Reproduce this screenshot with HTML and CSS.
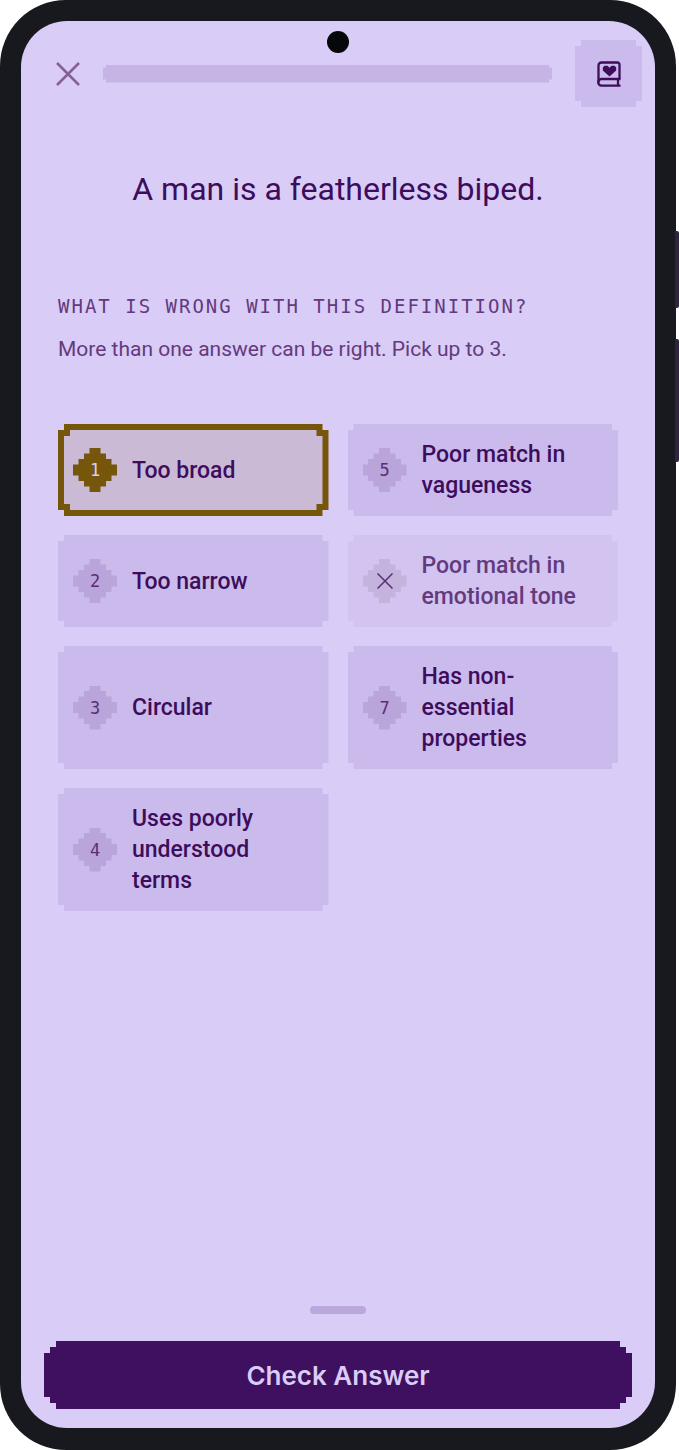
FILE: index.html
```html
<!DOCTYPE html>
<html lang="en">
<head>
    <meta charset="UTF-8">
    <meta name="viewport" content="width=device-width, initial-scale=1.0">
    <title>Definition Quiz</title>
    <link rel="stylesheet" href="styles.css">
</head>
<body>
    <div class="phone">
        <span class="side-button power"></span>
        <span class="side-button volume"></span>
        <span class="camera"></span>

        <div class="screen">
            <header class="top-bar">
                <button type="button" class="close" aria-label="Close">
                    <svg viewBox="0 0 24 24" width="24" height="24" fill="none" stroke="currentColor" stroke-width="2.500">
                        <path d="M1 1L23 23M23 1L1 23"/>
                    </svg>
                </button>
                <progress class="progress" value="0" max="100" aria-label="Progress"></progress>
                <button type="button" class="book" aria-label="Saved lessons">
                    <svg viewBox="0 0 24 26" width="24" height="26" fill="none" stroke="currentColor" stroke-width="2.300" stroke-linejoin="round">
                        <path d="M22.500 18V3.500a2 2 0 0 0-2-2H4.500a3 3 0 0 0-3 3v17"/>
                        <path d="M23.500 18H4.500a3.300 3.300 0 0 0 0 6.600H23.500M21 18v6.500"/>
                        <path d="M12.500 15.500L5.800 9.500V6.500L7.500 4.800h3l2 2 2-2h3l1.700 1.700v3z" fill="currentColor" stroke="none"/>
                    </svg>
                </button>
            </header>

            <main class="content">
                <h1>A man is a featherless biped.</h1>

                <h2>WHAT IS WRONG WITH THIS DEFINITION?</h2>
                <p class="hint">More than one answer can be right. Pick up to 3.</p>

                <form class="options" id="quiz">
                    <label class="option">
                        <input type="checkbox" name="answer" value="1" checked>
                        <span class="badge">1</span>
                        <span class="text">Too broad</span>
                    </label>
                    <label class="option">
                        <input type="checkbox" name="answer" value="2">
                        <span class="badge">2</span>
                        <span class="text">Too narrow</span>
                    </label>
                    <label class="option">
                        <input type="checkbox" name="answer" value="3">
                        <span class="badge">3</span>
                        <span class="text">Circular</span>
                    </label>
                    <label class="option">
                        <input type="checkbox" name="answer" value="4">
                        <span class="badge">4</span>
                        <span class="text">Uses poorly understood terms</span>
                    </label>
                    <label class="option">
                        <input type="checkbox" name="answer" value="5">
                        <span class="badge">5</span>
                        <span class="text">Poor match in vagueness</span>
                    </label>
                    <label class="option excluded">
                        <input type="checkbox" name="answer" value="6" disabled>
                        <span class="badge">
                            <svg viewBox="0 0 16 16" width="16" height="16" fill="none" stroke="currentColor" stroke-width="1.500">
                                <path d="M.5.5l15 15M15.500.5l-15 15"/>
                            </svg>
                        </span>
                        <span class="text">Poor match in emotional tone</span>
                    </label>
                    <label class="option">
                        <input type="checkbox" name="answer" value="7">
                        <span class="badge">7</span>
                        <span class="text">Has non-essential properties</span>
                    </label>
                </form>
            </main>

            <footer class="bottom">
                <span class="handle"></span>
                <button type="submit" form="quiz" class="check">Check Answer</button>
            </footer>
        </div>
    </div>
</body>
</html>
```
FILE: styles.css
```css
* {
    box-sizing: border-box;
}
body {
    margin: 0;
    background-color: #fff;
    font-family: Roboto, "Liberation Sans", sans-serif;
    color: #3d0d5c;
}
button {
    border: none;
    padding: 0;
    color: inherit;
    cursor: pointer;
}

/* Device */
.phone {
    position: relative;
    display: flex;
    min-height: 100vh;
    margin-right: 3px;
    padding: 21px 21px 22px;
    background-color: #17191e;
    border-radius: 66px;
}
.side-button {
    position: absolute;
    right: -3px;
    width: 4px;
    background-color: #2f2440;
    border-radius: 0 2px 2px 0;
}
.power {
    top: 231px;
    height: 77px;
}
.volume {
    top: 339px;
    height: 123px;
}
.camera {
    position: absolute;
    top: 31px;
    left: 50%;
    width: 22px;
    height: 22px;
    margin-left: -11px;
    background-color: #05070a;
    border-radius: 50%;
}
.screen {
    flex: 1;
    display: flex;
    flex-direction: column;
    background-color: #d9ccf7;
    border-radius: 46px;
}

/* Top bar */
.top-bar {
    display: flex;
    align-items: center;
    gap: 23px;
    padding: 19px 13px 0 35px;
}
.close {
    display: flex;
    background: none;
    color: #856098;
}
.progress {
    appearance: none;
    flex: 1;
    min-width: 0;
    height: 18px;
    border: none;
    background-color: #c6b4e7;
    clip-path: polygon(3px 0, calc(100% - 3px) 0, calc(100% - 3px) 3px, 100% 3px, 100% calc(100% - 3px), calc(100% - 3px) calc(100% - 3px), calc(100% - 3px) 100%, 3px 100%, 3px calc(100% - 3px), 0 calc(100% - 3px), 0 3px, 3px 3px);
}
.progress::-webkit-progress-bar {
    background-color: #c6b4e7;
}
.progress::-webkit-progress-value {
    background-color: #3e105f;
}
.book,
.option,
.option::before {
    clip-path: polygon(6px 0, calc(100% - 6px) 0, calc(100% - 6px) 6px, 100% 6px, 100% calc(100% - 6px), calc(100% - 6px) calc(100% - 6px), calc(100% - 6px) 100%, 6px 100%, 6px calc(100% - 6px), 0 calc(100% - 6px), 0 6px, 6px 6px);
}
.book {
    display: flex;
    align-items: center;
    justify-content: center;
    width: 67px;
    height: 67px;
    background-color: #cbbbec;
}

/* Question */
.content {
    flex: 1;
    padding: 62px 37px 24px;
}
h1 {
    margin: 0 0 82px;
    font-size: 32px;
    font-weight: 400;
    line-height: 40px;
    text-align: center;
}
h2 {
    margin: 0 0 13px;
    font-family: "DejaVu Sans Mono", monospace;
    font-size: 19px;
    font-weight: 400;
    line-height: 30px;
    letter-spacing: 2px;
    color: #633a7d;
}
.hint {
    margin: 0 0 60px;
    font-size: 21px;
    line-height: 30px;
    color: #633a7d;
}

/* Answers run down the left column first */
.options {
    display: grid;
    grid-auto-flow: column;
    grid-template-rows: repeat(4, auto);
    grid-template-columns: 1fr 1fr;
    gap: 19px;
}
.option {
    position: relative;
    display: flex;
    align-items: center;
    gap: 15px;
    padding: 15px;
    min-height: 92px;
    background-color: #cbbbec;
    cursor: pointer;
}
.option input {
    position: absolute;
    opacity: 0;
    margin: 0;
}
.badge {
    flex: none;
    display: flex;
    align-items: center;
    justify-content: center;
    width: 44px;
    height: 44px;
    background-color: #b9a5d9;
    color: #5a2d78;
    font-family: "DejaVu Sans Mono", monospace;
    font-size: 17px;
    clip-path: polygon(37.5% 0, 62.5% 0, 62.5% 12.5%, 75% 12.5%, 75% 25%, 87.5% 25%, 87.5% 37.5%, 100% 37.5%, 100% 62.5%, 87.5% 62.5%, 87.5% 75%, 75% 75%, 75% 87.5%, 62.5% 87.5%, 62.5% 100%, 37.5% 100%, 37.5% 87.5%, 25% 87.5%, 25% 75%, 12.5% 75%, 12.5% 62.5%, 0 62.5%, 0 37.5%, 12.5% 37.5%, 12.5% 25%, 25% 25%, 25% 12.5%, 37.5% 12.5%);
}
.text {
    font-size: 23px;
    font-weight: 500;
    line-height: 31px;
}
.option:has(input:checked) {
    background-color: #76560a;
}
.option:has(input:checked)::before {
    content: "";
    position: absolute;
    inset: 6px;
    background-color: #cbbad6;
}
.option:has(input:checked) .badge {
    background-color: #76560a;
    color: #d9ccf7;
}
.option:has(input:checked) span {
    z-index: 1;
}
.excluded {
    background-color: #d2c3f1;
    color: #633a7d;
    cursor: default;
}
.excluded .badge {
    background-color: #c4b3dc;
}

/* Footer */
.bottom {
    display: flex;
    flex-direction: column;
    align-items: center;
    gap: 27px;
    padding: 0 23px 19px;
}
.handle {
    width: 56px;
    height: 8px;
    background-color: #baa7db;
    border-radius: 4px;
}
.check {
    width: 100%;
    height: 68px;
    background-color: #3e105f;
    color: #d9ccf7;
    font-family: Inter, sans-serif;
    font-size: 26px;
    font-weight: 600;
    clip-path: polygon(12px 0, calc(100% - 12px) 0, calc(100% - 12px) 6px, calc(100% - 6px) 6px, calc(100% - 6px) 12px, 100% 12px, 100% calc(100% - 12px), calc(100% - 6px) calc(100% - 12px), calc(100% - 6px) calc(100% - 6px), calc(100% - 12px) calc(100% - 6px), calc(100% - 12px) 100%, 12px 100%, 12px calc(100% - 6px), 6px calc(100% - 6px), 6px calc(100% - 12px), 0 calc(100% - 12px), 0 12px, 6px 12px, 6px 6px, 12px 6px);
}
```
